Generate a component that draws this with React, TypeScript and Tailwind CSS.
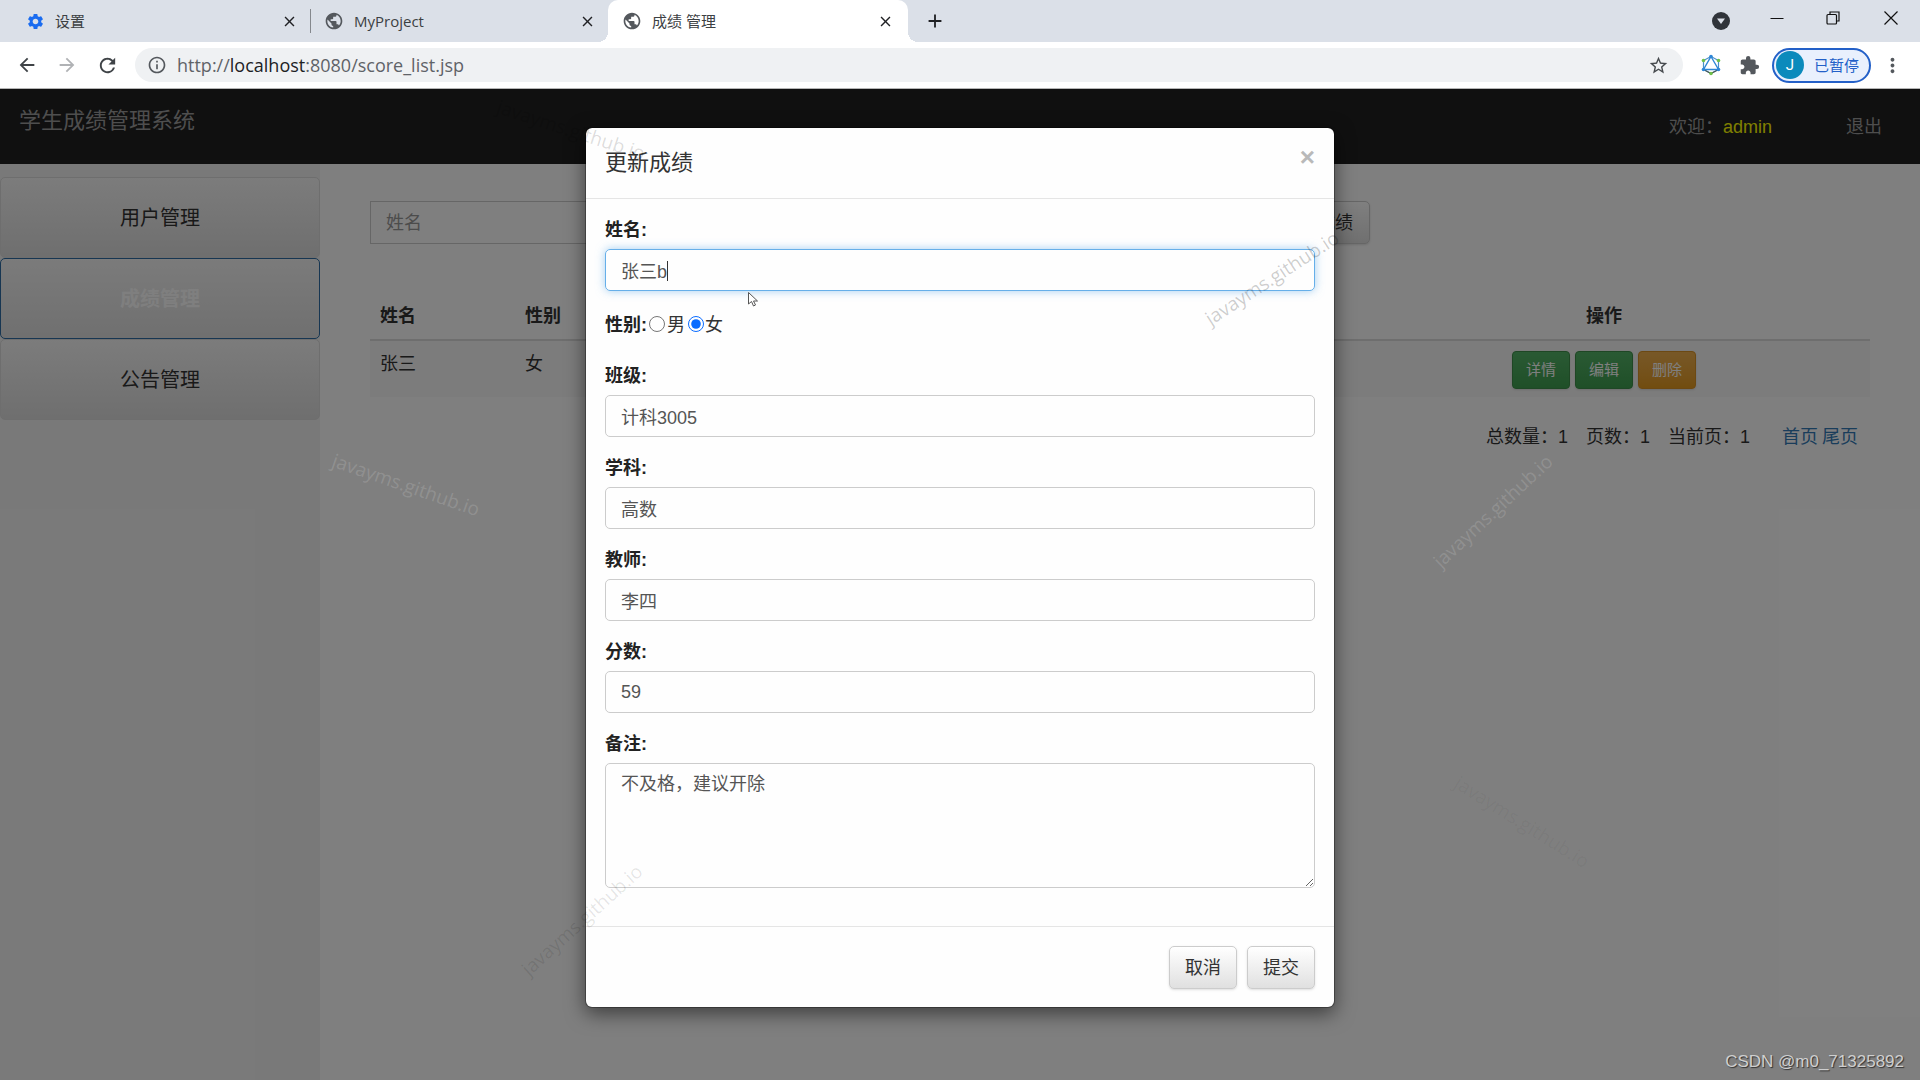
import { type ReactNode } from "react";
import {
  MdAdd,
  MdArrowBack,
  MdArrowForward,
  MdClose,
  MdExtension,
  MdInfoOutline,
  MdMoreVert,
  MdPublic,
  MdRefresh,
  MdSettings,
  MdStarBorder,
} from "react-icons/md";

function Tab({ icon, title, active = false }: { icon: ReactNode; title: string; active?: boolean }) {
  return (
    <div
      className={
        active
          ? "relative flex h-full w-[300px] items-center rounded-t-[10px] bg-white px-3.5"
          : "flex h-full w-[296px] items-center pl-3 pr-3"
      }
    >
      {active && (
        <>
          <span className="absolute bottom-0 right-full size-2.5 bg-[radial-gradient(circle_at_0_0,transparent_10px,white_10px)]" />
          <span className="absolute bottom-0 left-full size-2.5 bg-[radial-gradient(circle_at_100%_0,transparent_10px,white_10px)]" />
        </>
      )}
      {icon}
      <span className="ml-2.5 flex-1 truncate text-[15px] leading-5 text-[#3c4043]">{title}</span>
      <button type="button" aria-label={`关闭 ${title}`} className="text-[#202124]">
        <MdClose size={17} />
      </button>
    </div>
  );
}

function GraphIcon() {
  return (
    <svg width="20" height="22" viewBox="0 0 20 22" fill="none" aria-hidden="true">
      <path d="M10 2.5 2.5 6.5v9L10 19.5" stroke="#4a90c8" strokeWidth="1.2" />
      <path d="M10 2.5l7.5 4v9L10 19.5" stroke="#4a90c8" strokeWidth="1.2" />
      <path d="M2.5 15.5 10 19.5l7.5-4" stroke="#4d5a55" strokeWidth="1.3" />
      <path d="M10 2.5 17.5 15.5h-15z" stroke="#2f86d6" strokeWidth="1.4" />
      <circle cx="10" cy="2.5" r="1.8" fill="#2f86d6" />
      <circle cx="17.5" cy="15.5" r="1.8" fill="#2f86d6" />
      <circle cx="2.5" cy="15.5" r="1.8" fill="#2f86d6" />
      <circle cx="2.5" cy="6.5" r="1.8" fill="#6fbf4a" />
      <circle cx="17.5" cy="6.5" r="1.8" fill="#6fbf4a" />
      <circle cx="10" cy="19.5" r="1.8" fill="#6fbf4a" />
    </svg>
  );
}

function BrowserChrome() {
  return (
    <div className="font-['Open_Sans','Noto_Sans_CJK_SC',sans-serif]">
      <div className="flex h-[42px] items-center bg-[#dbe0e8] pl-3.5">
        <Tab icon={<MdSettings size={19} className="text-[#1a6cf0]" />} title="设置" />
        <span className="mr-px h-6 w-px shrink-0 bg-[#85888d]" />
        <Tab icon={<MdPublic size={20} className="text-[#54585d]" />} title="MyProject" />
        <Tab icon={<MdPublic size={20} className="text-[#54585d]" />} title="成绩 管理" active />
        <button type="button" aria-label="新标签页" className="ml-4 text-[#202124]">
          <MdAdd size={22} />
        </button>
        <div className="ml-auto flex items-center">
          <button type="button" aria-label="搜索标签页" className="mr-[40px]">
            <svg width="18" height="18" viewBox="0 0 18 18" aria-hidden="true">
              <circle cx="9" cy="9" r="9" fill="#30343a" />
              <path d="M5 6.5h8L9 12z" fill="#dbe0e8" />
            </svg>
          </button>
          <button type="button" aria-label="最小化" className="mb-1.5 mr-[42px] w-[14px]">
            <svg width="14" height="14" viewBox="0 0 14 14" stroke="#111" fill="none" aria-hidden="true">
              <path d="M.5 7.5h13" />
            </svg>
          </button>
          <button type="button" aria-label="还原" className="mb-1.5 mr-[44px] w-[14px]">
            <svg width="14" height="14" viewBox="0 0 14 14" stroke="#111" strokeWidth="1.2" fill="none" aria-hidden="true">
              <rect x="1" y="3.5" width="9.5" height="9.5" rx="1" />
              <path d="M4 3.5V1h9v9h-2.500" />
            </svg>
          </button>
          <button type="button" aria-label="关闭窗口" className="mb-1.5 mr-[22px] w-[14px]">
            <svg width="14" height="14" viewBox="0 0 14 14" stroke="#111" fill="none" strokeWidth="1.2" aria-hidden="true">
              <path d="m.5.5 13 13M13.5.5l-13 13" />
            </svg>
          </button>
        </div>
      </div>
      <div className="flex h-[47px] items-center border-b border-[#b5b5b5] bg-white pl-4">
        <button type="button" aria-label="后退" className="mr-[18px] text-[#3f4347]">
          <MdArrowBack size={22} />
        </button>
        <button type="button" aria-label="前进" className="mr-[18px] text-[#b0b2b5]">
          <MdArrowForward size={22} />
        </button>
        <button type="button" aria-label="刷新" className="text-[#3f4347]">
          <MdRefresh size={23} />
        </button>
        <div className="ml-4 flex h-[34px] flex-1 items-center rounded-full bg-[#eff1f3] pl-3 pr-3.5">
          <MdInfoOutline size={20} className="text-[#54585d]" />
          <a href="#" className="ml-2.5 flex-1 text-lg leading-6 text-[#5f6368]">
            http://<span className="text-[#202124]">localhost</span>:8080/score_list.jsp
          </a>
          <button type="button" aria-label="收藏" className="text-[#45494d]">
            <MdStarBorder size={21} />
          </button>
        </div>
        <button type="button" aria-label="GraphQL" className="ml-[18px]">
          <GraphIcon />
        </button>
        <button type="button" aria-label="扩展程序" className="ml-[18px] text-[#54585d]">
          <MdExtension size={21} />
        </button>
        <button
          type="button"
          className="ml-3 flex h-[35px] items-center rounded-full border-2 border-[#2360c8] bg-[#e9f0fd] pl-0.5 pr-2.5 text-[15px] text-[#2360c8]"
        >
          <span className="mr-2.5 flex size-7 items-center justify-center rounded-full bg-[#0b8abc] font-['Roboto',sans-serif] text-white">
            J
          </span>
          已暂停
        </button>
        <button type="button" aria-label="菜单" className="ml-2.5 mr-4 text-[#54585d]">
          <MdMoreVert size={23} />
        </button>
      </div>
    </div>
  );
}

const sideItems = [
  { label: "用户管理", active: false },
  { label: "成绩管理", active: true },
  { label: "公告管理", active: false },
];

function Sidebar() {
  return (
    <nav className="w-[320px] shrink-0 bg-[#f3f3f3] pt-[13px]">
      {sideItems.map((item) => (
        <button
          key={item.label}
          type="button"
          className={
            item.active
              ? "block h-[81px] w-full rounded-[5px] border border-[#2e6da4] bg-linear-to-b from-[#f6f6f6] to-[#e0e0e0] text-xl font-bold text-white"
              : "block h-[81px] w-full rounded-[5px] border border-[#dcdcdc] bg-linear-to-b from-[#f8f8f8] to-[#dedede] text-xl text-[#333]"
          }
        >
          {item.label}
        </button>
      ))}
    </nav>
  );
}

function SmallButton({ children, warn = false }: { children: ReactNode; warn?: boolean }) {
  return (
    <button
      type="button"
      className={
        warn
          ? "h-[38px] rounded-[4px] border border-[#d99226] bg-linear-to-b from-[#efb04e] to-[#e49a1e] px-[13px] text-[15px] text-white shadow-sm"
          : "h-[38px] rounded-[4px] border border-[#3e8f4a] bg-linear-to-b from-[#54b468] to-[#3f9f50] px-[13px] text-[15px] text-white shadow-sm"
      }
    >
      {children}
    </button>
  );
}

function ScorePage() {
  return (
    <>
      <header className="flex h-[75px] items-start justify-between bg-[#202020] pl-[19px] pr-[38px] text-[#9d9d9d]">
        <span className="pt-4 text-[22px] leading-8">学生成绩管理系统</span>
        <div className="flex pt-6 text-lg leading-7">
          <span>
            欢迎：<span className="text-[#ffff00]">admin</span>
          </span>
          <a href="#" className="ml-[74px]">
            退出
          </a>
        </div>
      </header>
      <div className="flex flex-1">
        <Sidebar />
        <main className="flex-1 px-[50px] pt-[37px] text-[#333]">
          <div className="flex w-2/3">
            <input
              aria-label="姓名"
              placeholder="姓名"
              className="h-[43px] flex-1 border border-[#ccc] bg-white px-[15px] pt-0.5 text-lg placeholder:text-[#999]"
            />
            <button
              type="button"
              className="ml-2 h-[43px] rounded-[5px] border border-[#ccc] bg-linear-to-b from-white to-[#e0e0e0] px-4 text-lg shadow-sm"
            >
              添加成绩
            </button>
          </div>
          <table className="mt-[49px] w-full text-left text-lg leading-6">
            <thead>
              <tr className="h-[47px] border-b-2 border-[#ddd]">
                <th className="w-[145px] px-2.5">姓名</th>
                <th className="px-2.5">性别</th>
                <th className="w-[532px] text-center">操作</th>
              </tr>
            </thead>
            <tbody>
              <tr className="h-[57px] bg-[#f9f9f9] align-top">
                <td className="px-2.5 pt-[11px]">张三</td>
                <td className="px-2.5 pt-[11px]">女</td>
                <td className="pt-2.5">
                  <div className="flex justify-center gap-[5px]">
                    <SmallButton>详情</SmallButton>
                    <SmallButton>编辑</SmallButton>
                    <SmallButton warn>删除</SmallButton>
                  </div>
                </td>
              </tr>
            </tbody>
          </table>
          <div className="mt-[26px] flex justify-end pr-3 text-lg leading-7">
            <span className="mr-[18px]">总数量：1</span>
            <span className="mr-[18px]">页数：1</span>
            <span className="mr-8">当前页：1</span>
            <a href="#" className="mr-1 text-[#337ab7]">
              首页
            </a>
            <a href="#" className="text-[#337ab7]">
              尾页
            </a>
          </div>
        </main>
      </div>
    </>
  );
}

function Field({ id, label, value, focused = false }: { id: string; label: string; value: string; focused?: boolean }) {
  return (
    <div className="mb-[19px]">
      <label htmlFor={id} className="mb-1.5 block font-bold leading-[25px] text-[#222]">
        {label}
      </label>
      <div className="relative">
        <input
          id={id}
          defaultValue={value}
          className={
            focused
              ? "block h-[42px] w-full rounded-[5px] border border-[#66afe9] px-[15px] text-lg text-[#555] shadow-[0_0_10px_rgba(102,175,233,0.6)] outline-none"
              : "block h-[42px] w-full rounded-[5px] border border-[#ccc] px-[15px] text-lg text-[#555] outline-none"
          }
        />
        {focused && <span className="absolute left-[62px] top-3 h-5 w-px bg-[#333]" />}
      </div>
    </div>
  );
}

function ScoreDialog() {
  return (
    <div
      role="dialog"
      aria-modal="true"
      aria-labelledby="dialog-title"
      className="w-full max-w-[750px] rounded-[7px] border border-black/30 bg-[#fefefe] bg-clip-padding text-lg text-[#333] shadow-[0_6px_19px_rgba(0,0,0,0.5)]"
    >
      <div className="flex h-[71px] items-start justify-between border-b border-[#e5e5e5] px-[19px] pt-[19px]">
        <h2 id="dialog-title" className="text-[22px] leading-8">
          更新成绩
        </h2>
        <button type="button" aria-label="关闭" className="text-[26px] font-bold leading-5 text-[#b9b9b9]">
          ×
        </button>
      </div>
      <form className="px-[19px] pb-[38px] pt-[19px]">
        <Field id="name" label="姓名:" value="张三b" focused />
        <div className="mb-4 flex h-[38px] items-start pt-[3px] leading-[25px]">
          <span className="mr-0.5 font-bold text-[#222]">性别:</span>
          <input id="male" type="radio" name="gender" className="mt-[3px] size-4 accent-[#0a6cff]" />
          <label htmlFor="male" className="ml-0.5 mr-[3px]">
            男
          </label>
          <input id="female" type="radio" name="gender" defaultChecked className="mt-[3px] size-4 accent-[#0a6cff]" />
          <label htmlFor="female" className="ml-px">
            女
          </label>
        </div>
        <Field id="class" label="班级:" value="计科3005" />
        <Field id="subject" label="学科:" value="高数" />
        <Field id="teacher" label="教师:" value="李四" />
        <Field id="score" label="分数:" value="59" />
        <label htmlFor="remark" className="mb-1.5 block font-bold leading-[25px] text-[#222]">
          备注:
        </label>
        <textarea
          id="remark"
          defaultValue="不及格，建议开除"
          className="block h-[125px] w-full resize-y rounded-[5px] border border-[#ccc] px-[15px] py-2 text-lg leading-[25px] text-[#555] outline-none"
        />
      </form>
      <div className="flex justify-end gap-2.5 border-t border-[#e5e5e5] px-[19px] pb-[18px] pt-[19px]">
        {["取消", "提交"].map((label) => (
          <button
            key={label}
            type="button"
            className="h-[43px] w-[68px] rounded-[5px] border border-[#ccc] bg-linear-to-b from-white to-[#e0e0e0] shadow-sm"
          >
            {label}
          </button>
        ))}
      </div>
    </div>
  );
}

const stamps = [
  "left-[406px] top-[485px] rotate-[19deg] text-white/15",
  "left-[571px] top-[130px] rotate-[18deg] text-black/15",
  "left-[582px] top-[920px] -rotate-[42deg] text-black/10",
  "left-[1272px] top-[278px] -rotate-[33deg] text-black/20",
  "left-[1493px] top-[511px] -rotate-[43deg] text-white/15",
  "left-[1522px] top-[822px] rotate-[32deg] text-black/5",
];

export default function App() {
  return (
    <div className="relative flex min-h-screen flex-col overflow-hidden">
      <BrowserChrome />
      <div className="relative flex flex-1 flex-col bg-white font-['Liberation_Sans','Noto_Sans_CJK_SC',sans-serif]">
        <ScorePage />
        <div className="absolute inset-0 flex items-start justify-center bg-black/50 pt-[38px]">
          <ScoreDialog />
        </div>
      </div>
      <svg className="absolute left-[748px] top-[292px]" width="11" height="15" viewBox="0 0 11 15" aria-hidden="true">
        <path d="M.5.5v11.5l3-2.5 2 4.5 2-1-2-4h4z" fill="#fff" stroke="#555" />
      </svg>
      {stamps.map((place) => (
        <span
          key={place}
          className={`pointer-events-none absolute -translate-x-1/2 -translate-y-1/2 whitespace-nowrap font-['Open_Sans',sans-serif] text-[19px] ${place}`}
        >
          javayms.github.io
        </span>
      ))}
      <span className="absolute bottom-1.5 right-4 font-['Liberation_Sans',sans-serif] text-[17px] leading-6 text-[#cfcfcf] [text-shadow:1px_1px_1px_#333]">
        CSDN @m0_71325892
      </span>
    </div>
  );
}
